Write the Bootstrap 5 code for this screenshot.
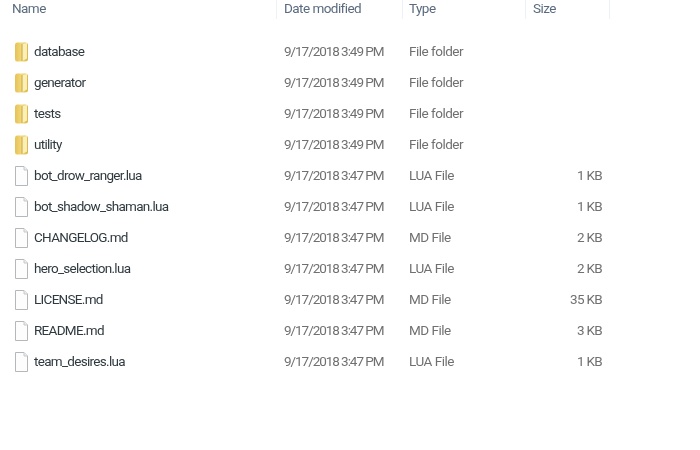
<!DOCTYPE html>
<html lang="en"><head><meta charset="utf-8"><title>Files</title>
<link rel="stylesheet" href="https://cdn.jsdelivr.net/npm/bootstrap@5.3.0/dist/css/bootstrap.min.css">
<style>
html,body{background:#fff;overflow:hidden}
.explorer{width:700px;height:450px;font-family:Roboto,"Open Sans",sans-serif;font-size:13.5px;letter-spacing:-.7px;color:#707070;filter:blur(.45px)}
.cols{display:grid;grid-template-columns:277px 126px 123px 84px;align-items:center}
.headrow{height:22px;margin-top:-3px;margin-bottom:17px;color:#5a6b7f;letter-spacing:-.55px}
.headrow>div{height:100%;display:flex;align-items:center;border-right:1px solid #eef2f6}
.hname{padding-left:12px}.hdate{padding-left:7px}.htype{padding-left:6px}.hsize{padding-left:7px}
.filerow{height:31px}
.fname{display:flex;align-items:center;color:#2f3a3f;padding-left:14px;gap:5px}
.fname svg{flex:none;width:15px;height:22px}
.fdate{padding-left:7px;letter-spacing:-1.05px}.ftype{padding-left:6px;letter-spacing:-.5px}.fsize{text-align:right;padding-right:8px}
</style></head><body>
<div class="explorer">
<div class="cols headrow"><div class="hname">Name</div><div class="hdate">Date modified</div><div class="htype">Type</div><div class="hsize">Size</div></div>
<svg width="0" height="0" class="d-block"><defs>
<linearGradient id="fg" x1="0" x2="1"><stop offset="0" stop-color="#e6c253"/><stop offset=".5" stop-color="#f2d87c"/><stop offset="1" stop-color="#dcb648"/></linearGradient>
<symbol id="folder" viewBox="0 0 15 22"><path d="M1 4Q1 1.500 3 1.500H11Q14 1.500 14 4V18Q14 20.500 11 20.500H3Q1 20.500 1 18Z" fill="url(#fg)"/><path d="M8 3L13 2V17.500L8 20Z" fill="#fbefb8"/><path d="M8 3V20" stroke="#c9a63f" stroke-width="1"/></symbol>
<symbol id="doc" viewBox="0 0 15 22"><path d="M1.500 1.500H10L13.500 5V20.500H1.500Z" fill="#fdfdfd" stroke="#b5b8bb"/><path d="M10 1.500V5H13.500" fill="#eee" stroke="#c5c8cb"/></symbol>
</defs></svg>
<div class="cols filerow"><div class="fname"><svg><use href="#folder"/></svg>database</div><div class="fdate">9/17/2018 3:49 PM</div><div class="ftype">File folder</div><div class="fsize"></div></div>
<div class="cols filerow"><div class="fname"><svg><use href="#folder"/></svg>generator</div><div class="fdate">9/17/2018 3:49 PM</div><div class="ftype">File folder</div><div class="fsize"></div></div>
<div class="cols filerow"><div class="fname"><svg><use href="#folder"/></svg>tests</div><div class="fdate">9/17/2018 3:49 PM</div><div class="ftype">File folder</div><div class="fsize"></div></div>
<div class="cols filerow"><div class="fname"><svg><use href="#folder"/></svg>utility</div><div class="fdate">9/17/2018 3:49 PM</div><div class="ftype">File folder</div><div class="fsize"></div></div>
<div class="cols filerow"><div class="fname"><svg><use href="#doc"/></svg>bot_drow_ranger.lua</div><div class="fdate">9/17/2018 3:47 PM</div><div class="ftype">LUA File</div><div class="fsize">1 KB</div></div>
<div class="cols filerow"><div class="fname"><svg><use href="#doc"/></svg>bot_shadow_shaman.lua</div><div class="fdate">9/17/2018 3:47 PM</div><div class="ftype">LUA File</div><div class="fsize">1 KB</div></div>
<div class="cols filerow"><div class="fname"><svg><use href="#doc"/></svg>CHANGELOG.md</div><div class="fdate">9/17/2018 3:47 PM</div><div class="ftype">MD File</div><div class="fsize">2 KB</div></div>
<div class="cols filerow"><div class="fname"><svg><use href="#doc"/></svg>hero_selection.lua</div><div class="fdate">9/17/2018 3:47 PM</div><div class="ftype">LUA File</div><div class="fsize">2 KB</div></div>
<div class="cols filerow"><div class="fname"><svg><use href="#doc"/></svg>LICENSE.md</div><div class="fdate">9/17/2018 3:47 PM</div><div class="ftype">MD File</div><div class="fsize">35 KB</div></div>
<div class="cols filerow"><div class="fname"><svg><use href="#doc"/></svg>README.md</div><div class="fdate">9/17/2018 3:47 PM</div><div class="ftype">MD File</div><div class="fsize">3 KB</div></div>
<div class="cols filerow"><div class="fname"><svg><use href="#doc"/></svg>team_desires.lua</div><div class="fdate">9/17/2018 3:47 PM</div><div class="ftype">LUA File</div><div class="fsize">1 KB</div></div>
</div>
<script src="https://cdn.jsdelivr.net/npm/bootstrap@5.3.0/dist/js/bootstrap.bundle.min.js"></script>
</body></html>
